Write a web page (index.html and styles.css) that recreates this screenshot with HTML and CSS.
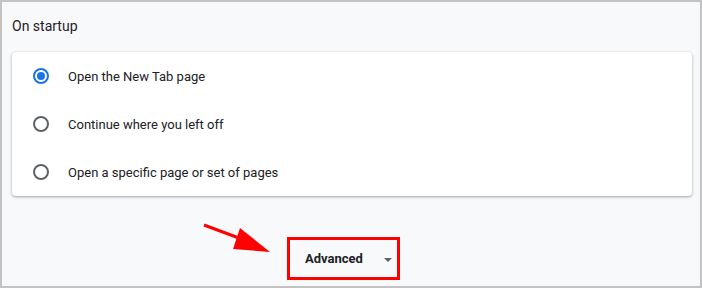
FILE: index.html
```html
<!DOCTYPE html>
<html lang="en">
<head>
  <meta charset="UTF-8" />
  <title>On startup</title>
  <link rel="stylesheet" href="styles.css">
</head>
<body>
  <div class="frame">
    <h2 class="section-title">On startup</h2>

    <div class="card">
      <label class="row">
        <span class="radio checked"></span>
        <span>Open the New Tab page</span>
      </label>
      <label class="row">
        <span class="radio"></span>
        <span>Continue where you left off</span>
      </label>
      <label class="row">
        <span class="radio"></span>
        <span>Open a specific page or set of pages</span>
      </label>
    </div>

    <div class="advanced-wrap">
      <svg class="pointer" width="80" height="40" viewBox="0 0 80 40">
        <line x1="2" y1="9" x2="45" y2="25" stroke="#f00" stroke-width="3" />
        <polygon points="38,12 31,33 68,36" fill="#f00" />
      </svg>
      <div class="advanced-box">
        <span class="advanced-label">Advanced</span>
        <span class="caret"></span>
      </div>
    </div>
  </div>
</body>
</html>
```

FILE: styles.css
```css
body { margin: 0; font-family: Roboto, "Liberation Sans", sans-serif; }
.frame {
  box-sizing: border-box;
  width: 702px;
  height: 288px;
  border: 2px solid #c3c3c3;
  background: #f8f9fa;
  padding: 0 8px 0 10px;
}
.section-title {
  margin: 0;
  padding: 16px 0 0 0;
  height: 34px;
  font-size: 14px;
  line-height: 16px;
  font-weight: 400;
  color: #202124;
}
.card {
  background: #fff;
  border-radius: 4px;
  box-shadow: 0 1px 2px rgba(60,64,67,0.3), 0 1px 3px 1px rgba(60,64,67,0.12);
}
.row {
  display: flex;
  align-items: center;
  height: 48px;
  padding-left: 21px;
  font-size: 13px;
  color: #202124;
}
.radio {
  box-sizing: border-box;
  width: 16px;
  height: 16px;
  border: 2px solid #5f6368;
  border-radius: 50%;
  margin-right: 19px;
  position: relative;
}
.radio.checked { border-color: #1a73e8; }
.radio.checked::after {
  content: "";
  position: absolute;
  left: 2px;
  top: 2px;
  width: 8px;
  height: 8px;
  border-radius: 50%;
  background: #1a73e8;
}
.advanced-wrap {
  display: flex;
  align-items: flex-start;
  margin-top: 20px;
  padding-left: 190px;
}
.advanced-box {
  box-sizing: border-box;
  margin-top: 21px;
  margin-left: 5px;
  width: 113px;
  height: 43px;
  border: 3px solid #f00;
  display: flex;
  align-items: center;
  padding-left: 15px;
}
.advanced-label {
  font-size: 13px;
  font-weight: 700;
  color: #202124;
}
.caret {
  margin-left: 21px;
  margin-top: 2px;
  border-left: 4px solid transparent;
  border-right: 4px solid transparent;
  border-top: 4px solid #5f6368;
}
```
